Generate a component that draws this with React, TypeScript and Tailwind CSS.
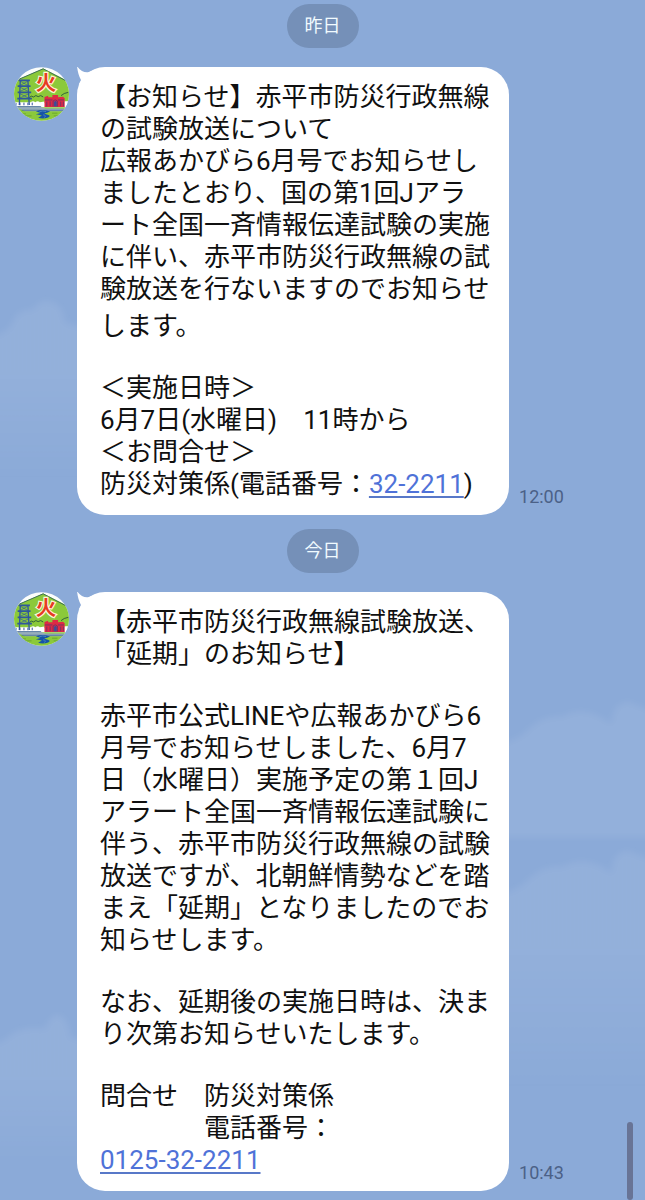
import type { ReactNode } from "react";

function Avatar({ id }: { id: string }) {
  return (
    <svg
      viewBox="42 48 166 162"
      className="h-[54px] w-[55px] shrink-0"
      role="img"
      aria-label="赤平市"
    >
      <defs>
        <clipPath id={id}>
          <ellipse cx="125" cy="129" rx="83" ry="81" />
        </clipPath>
      </defs>
      <g clipPath={`url(#${id})`}>
        <rect x="40" y="45" width="170" height="170" fill="#fbfdfb" />
        <path d="M40 96 L58 84 L130 52 L210 92 L210 150 L130 156 L40 156 Z" fill="#8bc93a" />
        <path d="M58 84 L130 53 L208 94" fill="none" stroke="#3c6f56" strokeWidth="3" />
        <path
          d="M88 140 q6 -8 13 -2 q7 -8 14 -1 q8 -7 15 1 M184 134 q8 -8 22 -10"
          fill="none"
          stroke="#31613a"
          strokeWidth="3"
        />
        <path
          d="M40 154 L92 154 q8 -6 14 0 q8 -6 14 0 l14 -2 V174 H40 Z M194 154 H210 V174 H194 Z"
          fill="#fff"
        />
        <g stroke="#2f579d" fill="none" strokeWidth="4">
          <path d="M61 88 L58 162 M84 88 L88 162" />
          <path d="M56 88 H90 M53 105 H92 M53 124 H94 M52 143 H96" strokeWidth="5" />
          <path
            d="M61 90 L85 104 M84 90 L59 104 M60 108 L86 122 M86 108 L59 122 M60 128 L88 142 M87 128 L58 142"
            strokeWidth="2"
          />
        </g>
        <path d="M48 156 v7 M60 155 v8 M72 155 v8 M84 155 v8 M97 155 v8" stroke="#34529b" strokeWidth="3" />
        <rect x="40" y="169" width="170" height="46" fill="#8bc93a" />
        <path d="M40 166 H118 L137 173 H206 L194 181 H76 Z" fill="#97adbc" />
        <path d="M40 167 H124 M65 178 H192" stroke="#375e91" strokeWidth="2" />
        <path
          d="M134 138 L145 134 V139 L158 139 V132 H175 V139 L190 137 L195 142 V168 H134 Z"
          fill="#df2944"
        />
        <path
          d="M135 147 H158 M175 147 H193 M141 152 V167 M151 151 V166 M183 152 V166 M191 152 V166 M160 167 V150 Q166 143 173 150 V167"
          fill="none"
          stroke="#773264"
          strokeWidth="3"
        />
        <path d="M163 167 V153 Q167 148 171 153 V167 Z" fill="#384e9b" />
        <path
          d="M108 181 Q131 173 151 182 L140 186 Q128 187 139 190 Q157 194 145 200 Q130 206 115 201 L126 194 L108 190 L122 186 Z"
          fill="#1554a8"
        />
        <path d="M118 183 Q128 178 139 182 M130 192 Q142 194 133 200" fill="none" stroke="#5e9cca" strokeWidth="2" />
        <path d="M60 189 h18 M74 195 h21 M157 187 h16 M162 195 h16" stroke="#5e972e" strokeWidth="2" />
      </g>
      <text
        x="139"
        y="118"
        textAnchor="middle"
        fontSize="62"
        fill="#e63b22"
        stroke="#fff6d8"
        strokeWidth="7"
        paintOrder="stroke"
        className="font-['Noto_Sans_CJK_JP',sans-serif] font-bold"
      >
        火
      </text>
    </svg>
  );
}

function DayLabel({ children }: { children: ReactNode }) {
  return (
    <div className="flex h-11 items-center self-center rounded-full bg-[#7590b8] px-[18px] text-lg text-[#f1fbff]">
      {children}
    </div>
  );
}

function Message({ id, time, children }: { id: string; time: string; children: ReactNode }) {
  return (
    <article className="flex items-start pl-3.5">
      <Avatar id={id} />
      <div className="relative ml-2 flex flex-col gap-[30px] whitespace-nowrap rounded-[28px] bg-white pt-3.5 pr-[19px] pb-[15px] pl-[23px] text-[26px] leading-8 text-[#101010]">
        <svg viewBox="0 0 20 18" className="absolute top-0 left-0 h-[18px] w-5" aria-hidden="true">
          <path d="M0 -1 C3 4 8 6 12 5 L20 2 L14 17 L2 17 L4 13 Q1 8 0 -1 Z" fill="#fff" />
        </svg>
        {children}
      </div>
      <time className="ml-2.5 self-end pb-2 text-lg leading-5 text-[#4b6187]">{time}</time>
    </article>
  );
}

function PhoneLink({ number }: { number: string }) {
  return (
    <a
      href={`tel:${number}`}
      className="text-[#4f72d8] underline decoration-[#5878c8] decoration-2 underline-offset-3"
    >
      {number}
    </a>
  );
}

function Sky() {
  return (
    <svg
      viewBox="0 0 645 1200"
      preserveAspectRatio="none"
      className="absolute inset-0 h-full w-full"
      aria-hidden="true"
    >
      <defs>
        <linearGradient id="cloud" x1="0" y1="0" x2="0" y2="1">
          <stop offset="0" stopColor="#fff" stopOpacity="0.07" />
          <stop offset="0.4" stopColor="#fff" stopOpacity="0.07" />
          <stop offset="1" stopColor="#fff" stopOpacity="0" />
        </linearGradient>
        <filter id="soft">
          <feGaussianBlur stdDeviation="3" />
        </filter>
      </defs>
      <g filter="url(#soft)">
        <path
          d="M-10 337 Q8 334 14 320 Q20 308 33 310 Q42 296 56 304 Q65 311 64 322 L90 330 V480 H-10 Z"
          fill="url(#cloud)"
        />
        <path
          d="M-10 1045 Q5 1042 12 1034 Q25 1026 45 1029 Q54 1007 65 1020 Q70 1028 70 1037 L90 1042 V1165 H-10 Z"
          fill="url(#cloud)"
        />
        <path
          d="M500 744 Q520 740 530 728 Q545 715 562 717 Q580 707 598 716 L612 724 Q612 704 628 702 L655 712 V837 H500 Z"
          fill="#fff"
          fillOpacity="0.07"
        />
        <path
          d="M500 895 Q520 890 530 878 Q545 865 562 867 Q580 857 598 865 L612 873 Q612 852 628 851 L655 861 V1090 H500 Z"
          fill="url(#cloud)"
        />
      </g>
    </svg>
  );
}

export default function App() {
  return (
    <div className="relative min-h-screen overflow-hidden bg-[#8baad8] font-[Roboto,'Noto_Sans_CJK_JP',sans-serif]">
      <Sky />
      <main lang="ja" className="relative flex flex-col pt-1 pb-2">
        <DayLabel>昨日</DayLabel>
        <div className="pt-[19px] pb-3.5">
          <Message id="avatar-yesterday" time="12:00">
            <p>
              【お知らせ】赤平市防災行政無線
              <br />
              の試験放送について
              <br />
              広報あかびら6月号でお知らせし
              <br />
              ましたとおり、国の第1回Jアラ
              <br />
              ート全国一斉情報伝達試験の実施
              <br />
              に伴い、赤平市防災行政無線の試
              <br />
              験放送を行ないますのでお知らせ
              <span className="block pt-[5px]">します。</span>
            </p>
            <p>
              ＜実施日時＞
              <br />
              6月7日(水曜日)　11時から
              <br />
              ＜お問合せ＞
              <br />
              防災対策係(電話番号：
              <PhoneLink number="32-2211" />)
            </p>
          </Message>
        </div>
        <DayLabel>今日</DayLabel>
        <div className="pt-[19px]">
          <Message id="avatar-today" time="10:43">
            <p>
              【赤平市防災行政無線試験放送、
              <br />
              「延期」のお知らせ】
            </p>
            <p>
              赤平市公式LINEや広報あかびら6
              <br />
              月号でお知らせしました、6月7
              <br />
              日（水曜日）実施予定の第１回J
              <br />
              アラート全国一斉情報伝達試験に
              <br />
              伴う、赤平市防災行政無線の試験
              <br />
              放送ですが、北朝鮮情勢などを踏
              <br />
              まえ「延期」となりましたのでお
              <br />
              知らせします。
            </p>
            <p>
              なお、延期後の実施日時は、決ま
              <br />
              り次第お知らせいたします。
            </p>
            <p>
              問合せ　防災対策係
              <br />
              {"　　　　電話番号："}
              <br />
              <PhoneLink number="0125-32-2211" />
            </p>
          </Message>
        </div>
      </main>
      <div className="absolute right-3 bottom-0 h-[78px] w-1.5 rounded-full bg-[#687496]" />
    </div>
  );
}
